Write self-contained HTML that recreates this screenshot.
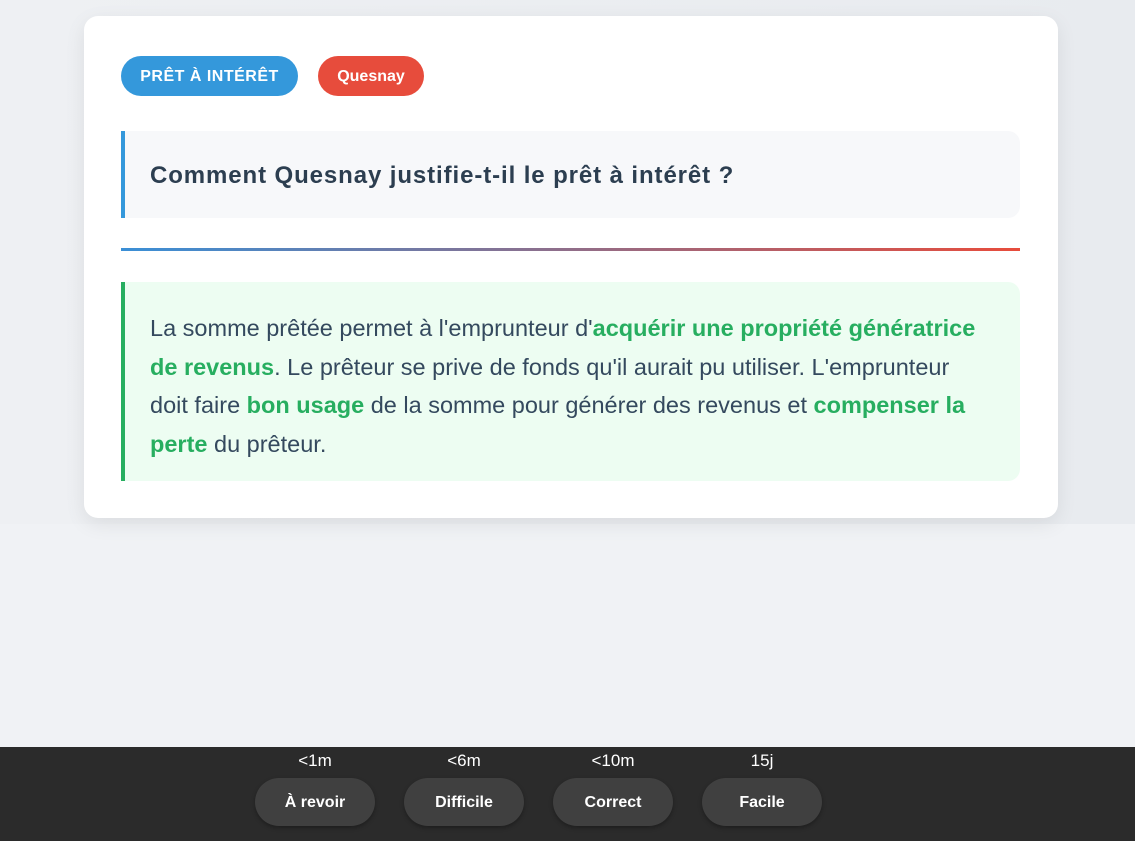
<!DOCTYPE html>
<html><head><meta charset="utf-8"><style>
*{margin:0;padding:0;box-sizing:border-box}
html,body{width:1135px;height:841px;overflow:hidden}
body{font-family:"Liberation Sans",sans-serif;background:#f0f2f5;position:relative;color:#2c3e50}
.top{position:absolute;left:0;top:0;width:1135px;height:524px;background:linear-gradient(90deg,#eef0f3,#e8ebef)}
.card{position:absolute;left:84px;top:16px;width:974px;height:502px;background:#fff;border-radius:14px;box-shadow:0 6px 20px rgba(0,0,0,.08)}
.tag{position:absolute;top:40px;height:40px;border-radius:20px;color:#fff;font-weight:bold;font-size:16px;line-height:41px;text-align:center}
.q{position:absolute;left:37px;top:115px;width:899px;height:87px;background:#f7f8fa;border-left:4px solid #3498db;border-radius:0 12px 12px 0;font-size:24px;letter-spacing:.9px;line-height:90px;padding-left:25px;color:#2c3e50;font-weight:bold}
.div{position:absolute;left:37px;top:232px;width:899px;height:3px;background:linear-gradient(90deg,#3a8fd6,#e74c3c)}
.a{position:absolute;left:37px;top:266px;width:899px;height:199px;background:#edfdf2;border-left:4px solid #27ae60;border-radius:0 12px 12px 0;padding:27px 0 0 25px;font-size:23.5px;line-height:38.5px;color:#34495e;white-space:nowrap}
.a b{color:#27ae60}
.bar{position:absolute;left:0;top:747px;width:1135px;height:94px;background:#2b2b2b}
.lab{position:absolute;top:4px;width:120px;text-align:center;color:#fff;font-size:17px}
.btn{position:absolute;top:31px;width:120px;height:48px;border-radius:24px;background:#404040;color:#fff;font-weight:bold;font-size:16px;line-height:49px;text-align:center;box-shadow:0 2px 4px rgba(0,0,0,.3)}
</style></head><body>
<div class="top"></div>
<div class="card">
<div class="tag" style="left:37px;width:177px;background:#3498db;letter-spacing:.5px">PRÊT À INTÉRÊT</div>
<div class="tag" style="left:234px;width:106px;background:#e74c3c">Quesnay</div>
<div class="q">Comment Quesnay justifie-t-il le prêt à intérêt ?</div>
<div class="div"></div>
<div class="a">La somme prêtée permet à l'emprunteur d'<b>acquérir une propriété génératrice</b><br><b>de revenus</b>. Le prêteur se prive de fonds qu'il aurait pu utiliser. L'emprunteur<br>doit faire <b>bon usage</b> de la somme pour générer des revenus et <b>compenser la</b><br><b>perte</b> du prêteur.</div>
</div>
<div class="bar">
<div class="lab" style="left:255px">&lt;1m</div><div class="btn" style="left:255px">À revoir</div>
<div class="lab" style="left:404px">&lt;6m</div><div class="btn" style="left:404px">Difficile</div>
<div class="lab" style="left:553px">&lt;10m</div><div class="btn" style="left:553px">Correct</div>
<div class="lab" style="left:702px">15j</div><div class="btn" style="left:702px">Facile</div>
</div>
</body></html>
